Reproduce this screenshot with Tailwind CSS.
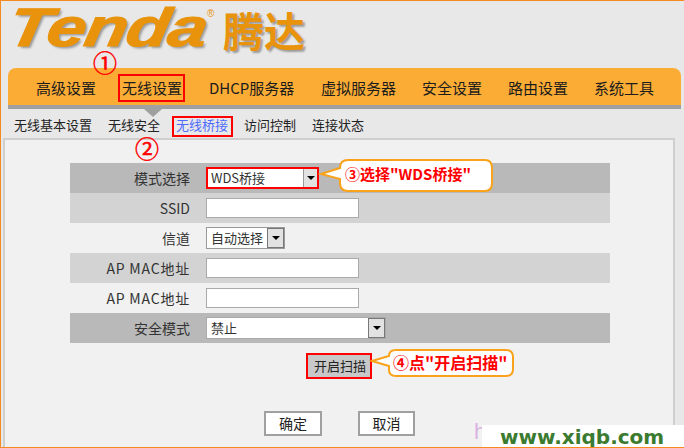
<!DOCTYPE html>
<html><head><meta charset="utf-8"><script src="https://cdn.jsdelivr.net/npm/@tailwindcss/browser@4"></script></head>
<body class="m-0">
<div class="relative w-[684px] h-[448px] overflow-hidden bg-[#e8e8e8] border-t border-l border-b border-[#f58a1f] text-[#222] font-['Noto_Sans_CJK_SC','Liberation_Sans',sans-serif]">
  <!-- logo -->
  <div class="h-[67px] relative">
    <div class="absolute left-[8px] top-0 text-[54px] leading-[52px] font-['Liberation_Sans'] font-bold italic text-[#e8930b] tracking-[-1px] [text-shadow:2px_2px_2px_#9a9a9a] [-webkit-text-stroke:1px_#e8930b] origin-left scale-x-[1.3] -skew-x-[8deg]">Tenda</div>
    <div class="absolute left-[206px] top-[8px] text-[10px] leading-[10px] text-[#e8930b] font-['Liberation_Sans']">®</div>
    <div class="absolute left-[222px] top-[4px] text-[41px] leading-[48px] font-bold text-[#e8930b] [text-shadow:2px_2px_2px_#9a9a9a]">腾达</div>
  </div>
  <!-- nav -->
  <div class="ml-[7px] w-[673px] h-[37px] bg-[#fbac35] rounded-t-[8px] flex items-center text-[15px] leading-[20px] text-[#1c1c1c] pl-[28px] pt-[2px]">
    <span class="w-[86px]">高级设置</span>
    <span class="w-[87px]">无线设置</span>
    <span class="w-[112px]">DHCP服务器</span>
    <span class="w-[101px]">虚拟服务器</span>
    <span class="w-[86px]">安全设置</span>
    <span class="w-[86px]">路由设置</span>
    <span>系统工具</span>
  </div>
  <div class="ml-[7px] w-[673px] h-[4px] bg-[#a0a0a0]"></div>
  <!-- subnav -->
  <div class="h-[30px] pl-[13px] flex items-start pt-[6px] text-[13px] leading-[20px] text-[#222]">
    <span class="w-[94px]">无线基本设置</span>
    <span class="w-[68px]">无线安全</span>
    <span class="w-[68px] text-[#4f6cff]">无线桥接</span>
    <span class="w-[68px]">访问控制</span>
    <span>连接状态</span>
  </div>
  <!-- panel -->
  <div class="absolute left-[2px] top-[137px] w-[672px] h-[320px] border-2 border-[#cfcfcf] bg-[#f1f1f1] pt-[23px] pl-[65px]">
    <div class="w-[540px] text-[14px] text-[#333]">
      <div class="h-[30px] bg-[#b9b9b9] flex items-center">
        <span class="w-[120px] text-right">模式选择</span>
        <div class="ml-[16px] w-[113px] h-[22px] border-2 border-[#ff0000] bg-white flex text-[13px] leading-[18px] pl-[3px] justify-between">
          <span>WDS桥接</span>
          <span class="w-[14px] bg-[#e2e2e2] border-l border-[#999] flex items-center justify-center"><span class="border-x-[4px] border-t-[4px] border-x-transparent border-t-black"></span></span>
        </div>
      </div>
      <div class="h-[30px] bg-[#d3d3d3] flex items-center">
        <span class="w-[120px] text-right">SSID</span>
        <input class="ml-[16px] w-[153px] h-[20px] border border-[#aaa] bg-white">
      </div>
      <div class="h-[30px] flex items-center">
        <span class="w-[120px] text-right">信道</span>
        <div class="ml-[16px] w-[79px] h-[22px] border border-[#999] bg-white flex text-[13px] leading-[20px] pl-[4px] justify-between">
          <span>自动选择</span>
          <span class="w-[17px] bg-[#e2e2e2] border border-[#777] flex items-center justify-center"><span class="border-x-[4px] border-t-[4px] border-x-transparent border-t-black"></span></span>
        </div>
      </div>
      <div class="h-[30px] bg-[#d3d3d3] flex items-center">
        <span class="w-[120px] text-right tracking-[0.8px]">AP MAC地址</span>
        <input class="ml-[16px] w-[153px] h-[20px] border border-[#aaa] bg-white">
      </div>
      <div class="h-[30px] flex items-center">
        <span class="w-[120px] text-right tracking-[0.8px]">AP MAC地址</span>
        <input class="ml-[16px] w-[153px] h-[20px] border border-[#aaa] bg-white">
      </div>
      <div class="h-[30px] bg-[#b9b9b9] flex items-center">
        <span class="w-[120px] text-right">安全模式</span>
        <div class="ml-[16px] w-[180px] h-[22px] border border-[#aaa] bg-white flex text-[13px] leading-[20px] pl-[4px] justify-between">
          <span>禁止</span>
          <span class="w-[17px] bg-[#e2e2e2] border border-[#777] flex items-center justify-center"><span class="border-x-[4px] border-t-[4px] border-x-transparent border-t-black"></span></span>
        </div>
      </div>
    </div>
    <div class="mt-[10px] ml-[236px] w-[66px] h-[26px] border-[2px] border-[#ff0000] bg-[#c8c8c8] flex items-center justify-center pl-[2px] text-[13px] text-[#222]">开启扫描</div>
    <div class="mt-[32px] ml-[194px] flex gap-[36px] text-[14px]">
      <div class="w-[58px] h-[25px] border-2 border-[#a0a0a0] bg-white flex items-center justify-center">确定</div>
      <div class="w-[57px] h-[25px] border-2 border-[#a0a0a0] bg-white flex items-center justify-center">取消</div>
    </div>
  </div>
  <!-- annotations -->
  <div class="absolute left-[117px] top-[73px] w-[67px] h-[28px] border-[2px] border-[#ff0000]"></div>
  <div class="absolute left-[171px] top-[115px] w-[61px] h-[21px] border-[2px] border-[#ff0000]"></div>
  <div class="absolute left-[143px] top-[108px] w-0 h-0 border-x-[9px] border-t-[8px] border-x-transparent border-t-[#a0a0a0]"></div>
  <div class="absolute left-[89px] top-[50px] w-[30px] text-center text-[24px] leading-[22px] text-[#ff0000] [-webkit-text-stroke:0.5px_#ff0000]">①</div>
  <div class="absolute left-[131px] top-[136px] w-[30px] text-center text-[24px] leading-[22px] text-[#ff0000] [-webkit-text-stroke:0.5px_#ff0000]">②</div>
  <svg class="absolute left-0 top-0" width="684" height="448" fill="#fff" stroke="#f9a21a" stroke-width="2">
    <path d="M320 173 L339 167 Q339 159 347 159 L484 159 Q491 159 491 167 L491 182 Q491 190 484 190 L347 190 Q339 190 339 182 L339 178 Z"/>
    <path d="M371 360 L388 355 Q388 349 395 349 L505 349 Q512 349 512 356 L512 368 Q512 375 505 375 L395 375 Q388 375 388 369 L388 365 Z"/>
  </svg>
  <div class="absolute left-[344px] top-[162px] text-[15px] leading-[22px] font-bold text-[#ff0000] whitespace-nowrap">③选择"WDS桥接"</div>
  <div class="absolute left-[392px] top-[350px] text-[16px] leading-[22px] font-bold text-[#ff0000] whitespace-nowrap">④点"开启扫描"</div>
  <!-- watermark -->
  <div class="absolute left-[473px] top-[418px] text-[22px] leading-[26px] text-[#d9b3e3] font-['Liberation_Sans']">h</div>
  <div class="absolute left-[481px] top-[424px] w-[203px] h-[24px] bg-white pl-[18px] text-[20px] leading-[24px] font-bold text-[#3b7b30] font-['DejaVu_Sans']">www.xiqb.com</div>
</div>
</body></html>
